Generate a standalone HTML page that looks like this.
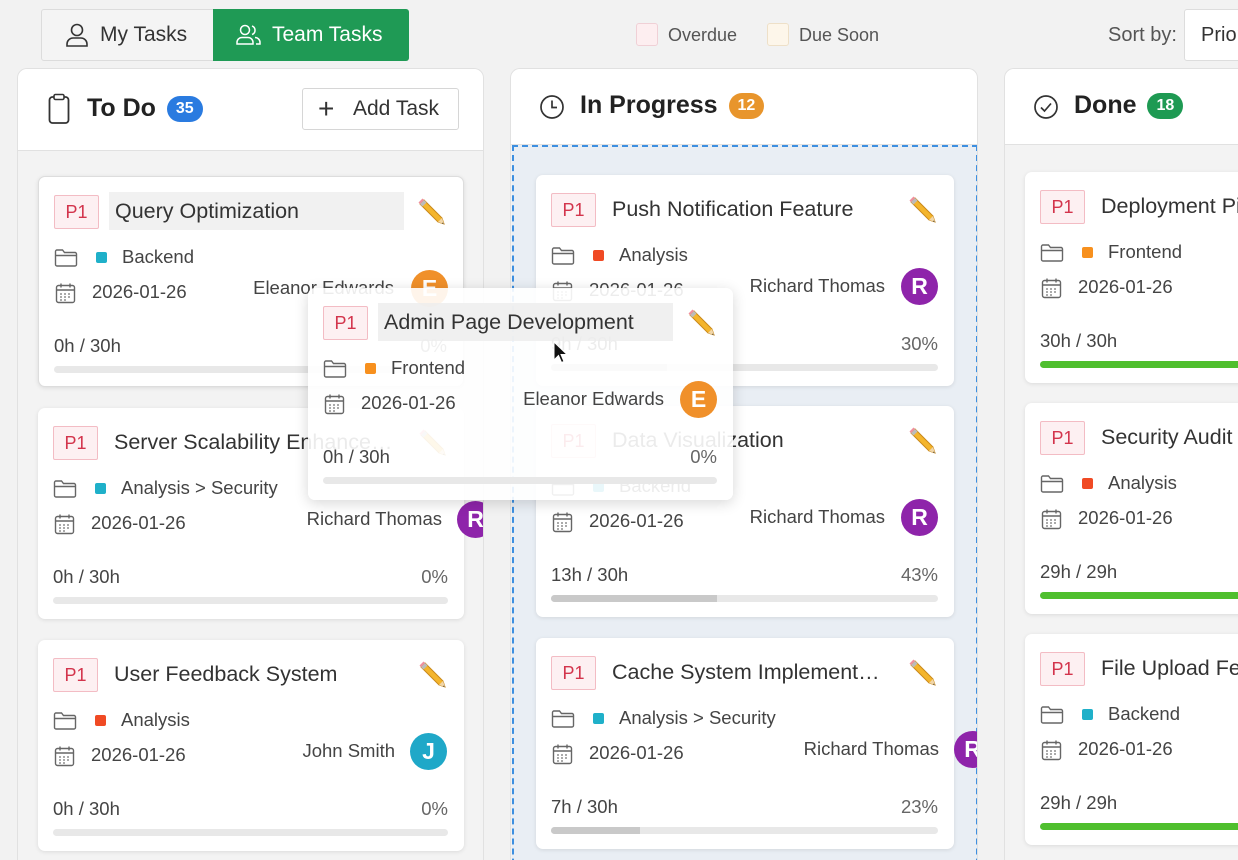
<!DOCTYPE html>
<html><head><meta charset="utf-8"><style>
*{box-sizing:border-box;margin:0;padding:0}
html,body{width:1238px;height:860px;overflow:hidden}
body{background:#f2f2f2;font-family:"Liberation Sans",Arial,sans-serif;color:#333;position:relative}
.a{position:absolute}
.col{position:absolute;top:68px;height:792px;border:1px solid #e1e1e1;border-bottom:none;border-radius:10px 10px 0 0;background:#f3f3f3;overflow:hidden}
.hdr{position:absolute;left:0;right:0;top:0;background:#fff;border-bottom:1px solid #e1e1e1}
.card{position:absolute;background:#fff;border-radius:7px;height:211px;box-shadow:0 1px 4px rgba(0,0,0,.1);overflow:visible}
.p1{position:absolute;left:15px;top:18px;width:45px;height:34px;border:1px solid #f3bcc4;background:#fdf0f2;color:#d3344c;font-size:18px;line-height:32px;text-align:center;border-radius:2px}
.tt{position:absolute;left:70px;top:15px;height:38px;line-height:38px;font-size:21.5px;padding-left:6px;white-space:nowrap;color:#333}
.pen{position:absolute;top:20px;width:28px;height:28px}
.fold{position:absolute;left:15px;top:71px;width:24px;height:20px}
.dot{position:absolute;left:57px;top:75px;width:11px;height:11px;border-radius:2px}
.cat{position:absolute;left:83px;top:70px;font-size:18.5px;line-height:20px;color:#444;white-space:nowrap}
.cal{position:absolute;left:16px;top:105px;width:21px;height:22px}
.date{position:absolute;left:53px;top:104px;font-size:18.5px;line-height:22px;color:#444}
.nm{position:absolute;top:100px;font-size:18.5px;line-height:22px;color:#444;white-space:nowrap}
.av{position:absolute;top:93px;width:37px;height:37px;border-radius:50%;color:#fff;font-weight:bold;font-size:23px;line-height:37px;text-align:center}
.hr{position:absolute;left:15px;top:158px;font-size:18.5px;line-height:22px;color:#444}
.pc{position:absolute;right:16px;top:158px;font-size:18.5px;line-height:22px;color:#666}
.bar{position:absolute;left:15px;right:16px;top:189px;height:7px;border-radius:4px;background:#e8e8e8;overflow:hidden}
.bar i{display:block;height:100%;background:#c9c9c9}
.cnt{display:inline-block;height:26px;border-radius:13px;color:#fff;font-size:16px;line-height:26px;padding:0 9px;font-weight:bold;vertical-align:middle}
.ht{position:absolute;font-size:25px;font-weight:bold;color:#222;line-height:30px}
</style></head><body>
<svg width="0" height="0" style="position:absolute">
<defs>
<symbol id="fold" viewBox="0 0 24 20"><path d="M1.5 3.5a1.5 1.5 0 0 1 1.5-1.5h5.5l2 2.5h10.5a1.5 1.5 0 0 1 1.5 1.5v10.5a1.5 1.5 0 0 1-1.5 1.5H3a1.5 1.5 0 0 1-1.5-1.5z M1.5 7.5h21" fill="none" stroke="#666" stroke-width="1.4"/></symbol>
<symbol id="cal" viewBox="0 0 21 22"><rect x="1.5" y="3.5" width="18" height="17" rx="2" fill="none" stroke="#666" stroke-width="1.4"/><path d="M6 1.5v4M15 1.5v4M1.5 8h18" stroke="#666" stroke-width="1.4"/><path d="M5 12h2M9 12h2M13 12h2M5 15h2M9 15h2M13 15h2M5 18h2M9 18h2" stroke="#777" stroke-width="1.2"/></symbol>
<symbol id="pen" viewBox="0 0 28 28"><path d="M7 3 L25 21 L27 27 L21 25 L3 7 Z" fill="#f4b52c" stroke="#c9881a" stroke-width="1"/><path d="M3 7 L7 3 L9.5 5.5 L5.5 9.5 Z" fill="#bbb"/><path d="M1.5 5.5 L5.5 1.5 L7 3 L3 7 Z" fill="#f08f9e"/><path d="M21 25 L25 21 L27 27 Z" fill="#f1d6a8"/><path d="M25.5 25.5 L27 27 L25 26.5 Z" fill="#444"/></symbol>
</defs></svg>

<!-- top bar -->
<div class="a" style="left:41px;top:9px;width:368px;height:52px;border:1px solid #dcdcdc;border-radius:3px;background:#f4f4f4"></div>
<div class="a" style="left:213px;top:9px;width:196px;height:52px;background:#1f9a55;border-radius:0 3px 3px 0"></div>
<svg class="a" style="left:64px;top:22px" width="26" height="26" viewBox="0 0 26 26"><circle cx="13" cy="8" r="5.5" fill="none" stroke="#333" stroke-width="1.6"/><path d="M3 24v-2a6 6 0 0 1 6-6h8a6 6 0 0 1 6 6v2z" fill="none" stroke="#333" stroke-width="1.6"/></svg>
<div class="a" style="left:100px;top:22px;font-size:21px;line-height:26px;color:#333">My Tasks</div>
<svg class="a" style="left:235px;top:23px" width="28" height="24" viewBox="0 0 28 24"><circle cx="10" cy="7" r="4.5" fill="none" stroke="#fff" stroke-width="1.5"/><path d="M2 21v-1.5a5 5 0 0 1 5-5h6a5 5 0 0 1 5 5V21z" fill="none" stroke="#fff" stroke-width="1.5"/><path d="M17 3a4.5 4.5 0 0 1 0 8.5M20 14.5a5 5 0 0 1 5 5V21h-4" fill="none" stroke="#fff" stroke-width="1.5"/></svg>
<div class="a" style="left:272px;top:22px;font-size:21px;line-height:26px;color:#fff">Team Tasks</div>
<div class="a" style="left:636px;top:23px;width:22px;height:23px;border:1px solid #f0d0d6;background:#fdeef0;border-radius:3px"></div>
<div class="a" style="left:668px;top:24px;font-size:18px;line-height:22px;color:#555">Overdue</div>
<div class="a" style="left:767px;top:23px;width:22px;height:23px;border:1px solid #eee0c8;background:#fdf6ea;border-radius:3px"></div>
<div class="a" style="left:799px;top:24px;font-size:18px;line-height:22px;color:#555">Due Soon</div>
<div class="a" style="left:1108px;top:23px;font-size:20px;line-height:24px;color:#555">Sort by:</div>
<div class="a" style="left:1184px;top:9px;width:70px;height:52px;border:1px solid #ddd;background:#fff;border-radius:3px"></div>
<div class="a" style="left:1201px;top:23px;font-size:20px;line-height:24px;color:#333">Priority</div>

<!-- To Do column -->
<div class="col" style="left:17px;width:467px">
 <div class="hdr" style="height:82px"></div>
 <svg class="a" style="left:30px;top:24px" width="22" height="32" viewBox="0 0 22 32"><rect x="1.5" y="4" width="19" height="26" rx="3" fill="none" stroke="#333" stroke-width="1.8"/><rect x="6" y="1.5" width="10" height="5" rx="1.5" fill="#fff" stroke="#333" stroke-width="1.6"/></svg>
 <div class="ht" style="left:69px;top:24px">To Do <span class="cnt" style="background:#2a7be0;margin-left:4px">35</span></div>
 <div class="a" style="left:284px;top:19px;width:157px;height:42px;border:1px solid #d6d6d6;border-radius:3px;background:#fff"></div>
 <div class="a" style="left:300px;top:26px;font-size:28px;line-height:28px;font-weight:300;color:#333">+</div>
 <div class="a" style="left:335px;top:28px;font-size:21px;line-height:24px;color:#333">Add Task</div>

 <div class="card" style="left:20px;top:107px;width:426px;border:1px solid #ddd">
  <div class="p1">P1</div><div class="tt" style="background:#f1f1f1;width:295px">Query Optimization</div>
  <svg class="pen" style="right:18px"><use href="#pen"/></svg>
  <svg class="fold"><use href="#fold"/></svg><div class="dot" style="background:#1fb0c9"></div><div class="cat">Backend</div>
  <svg class="cal"><use href="#cal"/></svg><div class="date">2026-01-26</div>
  <div class="nm" style="right:69px">Eleanor Edwards</div><div class="av" style="left:372px;background:#f0902a">E</div>
  <div class="hr">0h / 30h</div><div class="pc">0%</div><div class="bar"></div>
 </div>
 <div class="card" style="left:20px;top:339px;width:426px">
  <div class="p1">P1</div><div class="tt">Server Scalability Enhance…</div>
  <svg class="pen" style="right:18px"><use href="#pen"/></svg>
  <svg class="fold"><use href="#fold"/></svg><div class="dot" style="background:#1fb0c9"></div><div class="cat">Analysis &gt; Security</div>
  <svg class="cal"><use href="#cal"/></svg><div class="date">2026-01-26</div>
  <div class="nm" style="right:22px">Richard Thomas</div><div class="av" style="left:419px;background:#8e24aa">R</div>
  <div class="hr">0h / 30h</div><div class="pc">0%</div><div class="bar"></div>
 </div>
 <div class="card" style="left:20px;top:571px;width:426px">
  <div class="p1">P1</div><div class="tt">User Feedback System</div>
  <svg class="pen" style="right:18px"><use href="#pen"/></svg>
  <svg class="fold"><use href="#fold"/></svg><div class="dot" style="background:#f04a24"></div><div class="cat">Analysis</div>
  <svg class="cal"><use href="#cal"/></svg><div class="date">2026-01-26</div>
  <div class="nm" style="right:69px">John Smith</div><div class="av" style="left:372px;background:#1fa8c8">J</div>
  <div class="hr">0h / 30h</div><div class="pc">0%</div><div class="bar"></div>
 </div>
</div>

<!-- In Progress -->
<div class="col" style="left:510px;width:468px;background:#f2f2f2">
 <div class="hdr" style="height:76px"></div>
 <svg class="a" style="left:28px;top:25px" width="26" height="26" viewBox="0 0 26 26"><circle cx="13" cy="13" r="11" fill="none" stroke="#333" stroke-width="1.7"/><path d="M13 6.5V13.5h5" fill="none" stroke="#333" stroke-width="1.7"/></svg>
 <div class="ht" style="left:69px;top:21px">In Progress <span class="cnt" style="background:#e8952c;margin-left:4px">12</span></div>
 <div class="a" style="left:1px;top:76px;width:466px;height:800px;background:#e9eef4;border:2.5px dashed #3d8fe0;border-bottom:none"></div>

 <div class="card" style="left:25px;top:106px;width:418px">
  <div class="p1">P1</div><div class="tt">Push Notification Feature</div>
  <svg class="pen" style="right:18px"><use href="#pen"/></svg>
  <svg class="fold"><use href="#fold"/></svg><div class="dot" style="background:#f04a24"></div><div class="cat">Analysis</div>
  <svg class="cal"><use href="#cal"/></svg><div class="date">2026-01-26</div>
  <div class="nm" style="right:69px">Richard Thomas</div><div class="av" style="left:365px;background:#8e24aa">R</div>
  <div class="hr">9h / 30h</div><div class="pc">30%</div><div class="bar"><i style="width:30%"></i></div>
 </div>
 <div class="card" style="left:25px;top:337px;width:418px">
  <div class="p1">P1</div><div class="tt">Data Visualization</div>
  <svg class="pen" style="right:18px"><use href="#pen"/></svg>
  <svg class="fold"><use href="#fold"/></svg><div class="dot" style="background:#1fb0c9"></div><div class="cat">Backend</div>
  <svg class="cal"><use href="#cal"/></svg><div class="date">2026-01-26</div>
  <div class="nm" style="right:69px">Richard Thomas</div><div class="av" style="left:365px;background:#8e24aa">R</div>
  <div class="hr">13h / 30h</div><div class="pc">43%</div><div class="bar"><i style="width:43%"></i></div>
 </div>
 <div class="card" style="left:25px;top:569px;width:418px">
  <div class="p1">P1</div><div class="tt">Cache System Implement…</div>
  <svg class="pen" style="right:18px"><use href="#pen"/></svg>
  <svg class="fold"><use href="#fold"/></svg><div class="dot" style="background:#1fb0c9"></div><div class="cat">Analysis &gt; Security</div>
  <svg class="cal"><use href="#cal"/></svg><div class="date">2026-01-26</div>
  <div class="nm" style="right:15px">Richard Thomas</div><div class="av" style="left:418px;background:#8e24aa">R</div>
  <div class="hr">7h / 30h</div><div class="pc">23%</div><div class="bar"><i style="width:23%"></i></div>
 </div>
</div>

<!-- Done -->
<div class="col" style="left:1004px;width:300px">
 <div class="hdr" style="height:76px"></div>
 <svg class="a" style="left:28px;top:25px" width="26" height="26" viewBox="0 0 26 26"><circle cx="13" cy="13" r="11" fill="none" stroke="#333" stroke-width="1.7"/><path d="M8 13.5l3.5 3.5L18 9.5" fill="none" stroke="#333" stroke-width="1.7"/></svg>
 <div class="ht" style="left:69px;top:21px">Done <span class="cnt" style="background:#1e9a53;margin-left:4px">18</span></div>

 <div class="card" style="left:20px;top:103px;width:420px">
  <div class="p1">P1</div><div class="tt">Deployment Pipeline</div>
  <svg class="fold"><use href="#fold"/></svg><div class="dot" style="background:#f7901e"></div><div class="cat">Frontend</div>
  <svg class="cal"><use href="#cal"/></svg><div class="date">2026-01-26</div>
  <div class="hr">30h / 30h</div><div class="bar"><i style="width:100%;background:#4fbf2e"></i></div>
 </div>
 <div class="card" style="left:20px;top:334px;width:420px">
  <div class="p1">P1</div><div class="tt">Security Audit</div>
  <svg class="fold"><use href="#fold"/></svg><div class="dot" style="background:#f04a24"></div><div class="cat">Analysis</div>
  <svg class="cal"><use href="#cal"/></svg><div class="date">2026-01-26</div>
  <div class="hr">29h / 29h</div><div class="bar"><i style="width:100%;background:#4fbf2e"></i></div>
 </div>
 <div class="card" style="left:20px;top:565px;width:420px">
  <div class="p1">P1</div><div class="tt">File Upload Feature</div>
  <svg class="fold"><use href="#fold"/></svg><div class="dot" style="background:#1fb0c9"></div><div class="cat">Backend</div>
  <svg class="cal"><use href="#cal"/></svg><div class="date">2026-01-26</div>
  <div class="hr">29h / 29h</div><div class="bar"><i style="width:100%;background:#4fbf2e"></i></div>
 </div>
</div>

<!-- Drag ghost -->
<div class="card" style="left:308px;top:288px;width:425px;height:212px;background:rgba(255,255,255,0.9);box-shadow:0 3px 14px rgba(0,0,0,.16)">
  <div class="p1">P1</div><div class="tt" style="background:rgba(236,236,236,.8);width:295px">Admin Page Development</div>
  <svg class="pen" style="right:18px"><use href="#pen"/></svg>
  <svg class="fold"><use href="#fold"/></svg><div class="dot" style="background:#f7901e"></div><div class="cat">Frontend</div>
  <svg class="cal"><use href="#cal"/></svg><div class="date">2026-01-26</div>
  <div class="nm" style="right:69px">Eleanor Edwards</div><div class="av" style="left:372px;background:#f0902a">E</div>
  <div class="hr">0h / 30h</div><div class="pc">0%</div><div class="bar"></div>
</div>
<svg class="a" style="left:553px;top:341px" width="16" height="24" viewBox="0 0 16 24"><path d="M1 1v18l4.5-4.5 3 7 2.5-1-3-7H14z" fill="#111" stroke="#fff" stroke-width="1"/></svg>
</body></html>
